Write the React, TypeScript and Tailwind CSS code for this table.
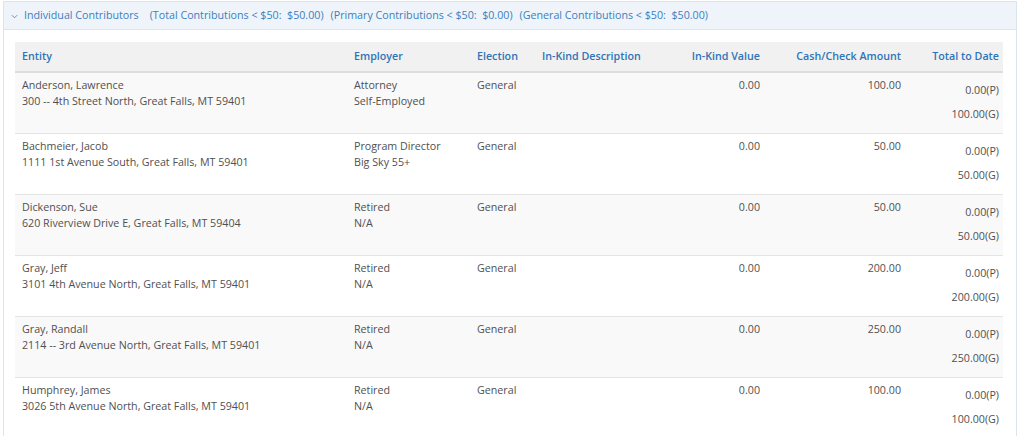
import React from "react";

type Row = {
  name: string;
  address: string;
  occupation: string;
  employer: string;
  election: string;
  inKind: string;
  cash: string;
  primary: string;
  general: string;
};

const rows: Row[] = [
  {
    name: "Anderson, Lawrence",
    address: "300 -- 4th Street North, Great Falls, MT 59401",
    occupation: "Attorney",
    employer: "Self-Employed",
    election: "General",
    inKind: "0.00",
    cash: "100.00",
    primary: "0.00(P)",
    general: "100.00(G)",
  },
  {
    name: "Bachmeier, Jacob",
    address: "1111 1st Avenue South, Great Falls, MT 59401",
    occupation: "Program Director",
    employer: "Big Sky 55+",
    election: "General",
    inKind: "0.00",
    cash: "50.00",
    primary: "0.00(P)",
    general: "50.00(G)",
  },
  {
    name: "Dickenson, Sue",
    address: "620 Riverview Drive E, Great Falls, MT 59404",
    occupation: "Retired",
    employer: "N/A",
    election: "General",
    inKind: "0.00",
    cash: "50.00",
    primary: "0.00(P)",
    general: "50.00(G)",
  },
  {
    name: "Gray, Jeff",
    address: "3101 4th Avenue North, Great Falls, MT 59401",
    occupation: "Retired",
    employer: "N/A",
    election: "General",
    inKind: "0.00",
    cash: "200.00",
    primary: "0.00(P)",
    general: "200.00(G)",
  },
  {
    name: "Gray, Randall",
    address: "2114 -- 3rd Avenue North, Great Falls, MT 59401",
    occupation: "Retired",
    employer: "N/A",
    election: "General",
    inKind: "0.00",
    cash: "250.00",
    primary: "0.00(P)",
    general: "250.00(G)",
  },
  {
    name: "Humphrey, James",
    address: "3026 5th Avenue North, Great Falls, MT 59401",
    occupation: "Retired",
    employer: "N/A",
    election: "General",
    inKind: "0.00",
    cash: "100.00",
    primary: "0.00(P)",
    general: "100.00(G)",
  },
];

const App = () => {
  return (
    <div
      className="w-[1024px] h-[436px] overflow-hidden bg-white pt-px text-[10.7px] text-[#505050]"
      style={{ fontFamily: '"Open Sans", "Liberation Sans", sans-serif' }}
    >
      <div className="ml-[3px] mr-[7px] border border-[#dbe5ef] border-b-0 h-[440px]">
        {/* panel heading */}
        <div className="flex h-[28px] items-center border-b border-[#dbe5ef] bg-[#eef4fa] pl-[7px] text-[#3b7fc0] whitespace-pre">
          <svg width="7" height="7" viewBox="0 0 8 8" className="mr-[6px] mt-px">
            <path d="M1 2.5 L4 5.5 L7 2.5" fill="none" stroke="#5b8fc4" strokeWidth="1.1" />
          </svg>
          <span>Individual Contributors</span>
          <span className="ml-[11px]">(Total Contributions &lt; $50:  $50.00)</span>
          <span className="ml-[7px]">(Primary Contributions &lt; $50:  $0.00)</span>
          <span className="ml-[7px]">(General Contributions &lt; $50:  $50.00)</span>
        </div>

        {/* panel body */}
        <div className="px-[11px] pt-[12px]">
          <table className="w-[988px] table-fixed border-collapse">
            <colgroup>
              <col className="w-[331px]" />
              <col className="w-[123px]" />
              <col className="w-[65px]" />
              <col className="w-[140px]" />
              <col className="w-[94px]" />
              <col className="w-[141px]" />
              <col className="w-[94px]" />
            </colgroup>
            <thead>
              <tr className="h-[30px] bg-[#f1f1f1] border-b-2 border-[#dedede] text-[#2e74b8]">
                <th className="px-[7px] text-left font-semibold">Entity</th>
                <th className="px-[8px] text-left font-semibold">Employer</th>
                <th className="px-[8px] text-left font-semibold">Election</th>
                <th className="px-[8px] text-left font-semibold">In-Kind Description</th>
                <th className="px-[8px] text-right font-semibold">In-Kind Value</th>
                <th className="px-[8px] text-right font-semibold">Cash/Check Amount</th>
                <th className="px-[4px] text-right font-semibold">Total to Date</th>
              </tr>
            </thead>
            <tbody>
              {rows.map((r, i) => (
                <tr
                  key={r.name}
                  className={`h-[61px] border-b border-[#e4e4e4] align-top leading-4 ${
                    i % 2 === 0 ? "bg-[#f9f9f9]" : "bg-white"
                  }`}
                >
                  <td className="px-[7px] pt-[4px]">
                    <div>{r.name}</div>
                    <div>{r.address}</div>
                  </td>
                  <td className="px-[8px] pt-[4px]">
                    <div>{r.occupation}</div>
                    <div>{r.employer}</div>
                  </td>
                  <td className="px-[8px] pt-[4px]">{r.election}</td>
                  <td className="px-[8px] pt-[4px]"></td>
                  <td className="px-[8px] pt-[4px] text-right">{r.inKind}</td>
                  <td className="px-[8px] pt-[4px] text-right">{r.cash}</td>
                  <td className="px-[4px] pt-[5px] text-right leading-6">
                    <div>{r.primary}</div>
                    <div>{r.general}</div>
                  </td>
                </tr>
              ))}
            </tbody>
          </table>
        </div>
      </div>
    </div>
  );
};

export default App;
